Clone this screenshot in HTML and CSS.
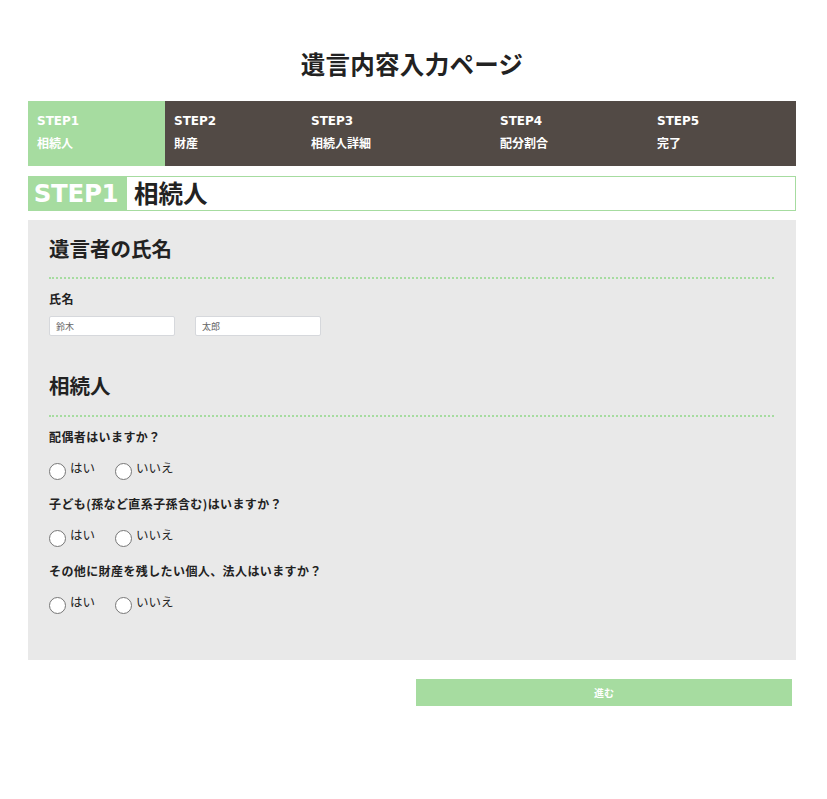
FILE: index.html
```html
<!DOCTYPE html>
<html lang="ja">
<head>
<meta charset="utf-8">
<title>遺言内容入力ページ</title>
<link rel="stylesheet" href="styles.css">
</head>
<body>
<div class="page">
  <h1 class="title">遺言内容入力ページ</h1>
  <ol class="steps">
    <li class="step step-1 active"><span class="step-no">STEP1</span><span class="step-name">相続人</span></li>
    <li class="step step-2"><span class="step-no">STEP2</span><span class="step-name">財産</span></li>
    <li class="step step-3"><span class="step-no">STEP3</span><span class="step-name">相続人詳細</span></li>
    <li class="step step-4"><span class="step-no">STEP4</span><span class="step-name">配分割合</span></li>
    <li class="step step-5"><span class="step-no">STEP5</span><span class="step-name">完了</span></li>
  </ol>
  <div class="step-heading"><span class="step-heading-no">STEP1</span><span class="step-heading-name">相続人</span></div>
  <form class="panel">
    <h2 class="section-title">遺言者の氏名</h2>
    <div class="field">
      <div class="label">氏名</div>
      <div class="name-inputs">
        <input class="text-input" type="text" placeholder="鈴木">
        <input class="text-input" type="text" placeholder="太郎">
      </div>
    </div>
    <h2 class="section-title section-gap">相続人</h2>
    <div class="question">
      <div class="label">配偶者はいますか？</div>
      <div class="choices">
        <label class="choice"><input class="radio" type="radio" name="q1"><span>はい</span></label>
        <label class="choice"><input class="radio" type="radio" name="q1"><span>いいえ</span></label>
      </div>
    </div>
    <div class="question">
      <div class="label">子ども(孫など直系子孫含む)はいますか？</div>
      <div class="choices">
        <label class="choice"><input class="radio" type="radio" name="q2"><span>はい</span></label>
        <label class="choice"><input class="radio" type="radio" name="q2"><span>いいえ</span></label>
      </div>
    </div>
    <div class="question">
      <div class="label">その他に財産を残したい個人、法人はいますか？</div>
      <div class="choices">
        <label class="choice"><input class="radio" type="radio" name="q3"><span>はい</span></label>
        <label class="choice"><input class="radio" type="radio" name="q3"><span>いいえ</span></label>
      </div>
    </div>
  </form>
  <div class="actions">
    <button class="next-btn" type="button">進む</button>
  </div>
</div>
</body>
</html>
```
FILE: styles.css
```css
* { box-sizing: border-box; }
html, body { margin: 0; padding: 0; background: #fff; }
body {
  font-family: "DejaVu Sans", "Noto Sans CJK JP", sans-serif;
  color: #222;
}
.page {
  width: 768px;
  margin: 0 0 0 28px;
  padding-top: 48px;
}
.title {
  margin: 0;
  text-align: center;
  font-size: 24.5px;
  line-height: 32px;
  font-weight: 700;
  letter-spacing: 0.3px;
  font-family: "Noto Sans CJK JP", sans-serif;
  color: #222;
}
.steps {
  list-style: none;
  margin: 21px 0 0;
  padding: 0;
  display: flex;
  height: 65px;
  background: #524a45;
}
.step {
  display: flex;
  flex-direction: column;
  padding: 12px 0 0 9px;
  color: #fff;
  font-weight: 700;
}
.step.active { background: #a6dca0; }
.step-1 { width: 137px; }
.step-2 { width: 137px; }
.step-3 { width: 189px; }
.step-4 { width: 157px; }
.step-5 { flex: 1; }
.step-no {
  font-size: 12px;
  line-height: 16px;
  letter-spacing: 0;
}
.step-name {
  margin-top: 6px;
  font-size: 12px;
  line-height: 16px;
  font-family: "Noto Sans CJK JP", sans-serif;
}
.step-heading {
  margin-top: 10px;
  display: flex;
  align-items: stretch;
  height: 35px;
  border: 1px solid #a6dca0;
}
.step-heading-no {
  width: 98px;
  background: #a6dca0;
  color: #fff;
  font-size: 24.5px;
  font-weight: 700;
  line-height: 33px;
  padding-right: 4px;
  text-align: center;
  letter-spacing: -0.3px;
}
.step-heading-name {
  padding-left: 7px;
  font-size: 24.5px;
  font-weight: 700;
  line-height: 31px;
  font-family: "Noto Sans CJK JP", sans-serif;
  color: #222;
}
.panel {
  margin-top: 9px;
  background: #e9e9e9;
  padding: 14px 22px 40px 21px;
  height: 440px;
  font-family: "Noto Sans CJK JP", sans-serif;
}
.section-title {
  margin: 0;
  font-size: 20.5px;
  line-height: 28px;
  font-weight: 700;
  padding-bottom: 15px;
  border-bottom: 2px dotted #a6dca0;
  color: #222;
}
.section-gap { margin-top: 35px; padding-bottom: 16px; }
.field { margin-top: 11px; }
.label {
  font-size: 12px;
  line-height: 18px;
  font-weight: 700;
  letter-spacing: 0.4px;
  color: #222;
}
.name-inputs {
  display: flex;
  gap: 20px;
  margin-top: 8px;
}
.text-input {
  width: 126px;
  height: 20px;
  border: 1px solid #d6d8dc;
  border-radius: 2px;
  background: #fff;
  padding: 0 6px;
  font-size: 9px;
  font-family: "Noto Sans CJK JP", sans-serif;
  outline: none;
}
.text-input::placeholder { color: #666; }
.question { margin-top: 11px; }
.question + .question { margin-top: 15px; }
.choices {
  display: flex;
  margin-top: 15px;
}
.choice {
  display: flex;
  align-items: flex-start;
  width: 66px;
  font-size: 12.5px;
  line-height: 14px;
  color: #222;
}
.radio {
  appearance: none;
  -webkit-appearance: none;
  margin: 2px 4px 0 0;
  width: 17px;
  height: 17px;
  border: 1px solid #777;
  border-radius: 50%;
  background: #fff;
  flex: none;
}
.actions {
  display: flex;
  justify-content: flex-end;
  padding-right: 4px;
  margin-top: 19px;
}
.next-btn {
  width: 376px;
  height: 27px;
  border: none;
  background: #a6dca0;
  color: #fff;
  font-weight: 700;
  font-size: 10px;
  font-family: "Noto Sans CJK JP", sans-serif;
  padding: 0;
}
```
